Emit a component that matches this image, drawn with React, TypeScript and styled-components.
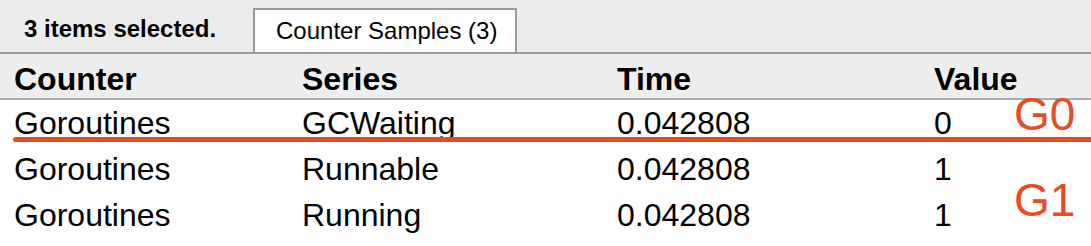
import React from 'react';
import styled, { createGlobalStyle } from 'styled-components';

const FONT = '"Liberation Sans", Arial, Helvetica, sans-serif';
const ACCENT = '#e84c22';

const GlobalStyle = createGlobalStyle`
  html, body {
    margin: 0;
    padding: 0;
    background: #ffffff;
  }
  body {
    font-family: ${FONT};
    color: #000;
    overflow: hidden;
  }
`;

const Page = styled.div`
  position: relative;
  width: 1091px;
  height: 246px;
  overflow: hidden;
  background: #ffffff;
`;

const TopBar = styled.div`
  display: flex;
  align-items: flex-end;
  height: 52px;
  background: #ececec;
  border-bottom: 2px solid #999999;
`;

const Selection = styled.div`
  font-size: 24px;
  font-weight: bold;
  line-height: 28px;
  padding: 0 0 9px 24px;
  width: 229px;
`;

const Tab = styled.div`
  box-sizing: border-box;
  height: 44px;
  width: 264px;
  padding: 7px 0 0 21px;
  font-size: 24px;
  line-height: 28px;
  background: #ffffff;
  border: 2px solid #999999;
  border-bottom: none;
`;

const Grid = styled.div`
  display: grid;
  grid-template-columns: 288px 315px 317px 1fr;
  padding-left: 14px;
`;

const HeaderRow = styled(Grid)`
  background: #eeeeee;
  border-bottom: 2px solid #aaaaaa;
  height: 46px;
  box-sizing: border-box;
  padding-top: 6px;
`;

const HeadCell = styled.div`
  font-size: 32px;
  font-weight: bold;
  line-height: 38px;
`;

const Row = styled(Grid)`
  height: 46px;
`;

const Cell = styled.div`
  font-size: 32px;
  line-height: 46px;
  white-space: nowrap;
`;

const Underline = styled.div`
  position: absolute;
  left: 13px;
  right: 0;
  top: 137px;
  height: 5px;
  background: ${ACCENT};
  border-radius: 3px 0 0 3px;
`;

const Tag = styled.div<{ $top: number }>`
  position: absolute;
  left: 1014px;
  top: ${p => p.$top}px;
  font-size: 46px;
  line-height: 1;
  color: ${ACCENT};
`;

interface Sample {
  counter: string;
  series: string;
  time: string;
  value: number;
}

const samples: Sample[] = [
  { counter: 'Goroutines', series: 'GCWaiting', time: '0.042808', value: 0 },
  { counter: 'Goroutines', series: 'Runnable', time: '0.042808', value: 1 },
  { counter: 'Goroutines', series: 'Running', time: '0.042808', value: 1 },
];

export default function App() {
  return (
    <Page>
      <GlobalStyle />
      <TopBar>
        <Selection>3 items selected.</Selection>
        <Tab>Counter Samples (3)</Tab>
      </TopBar>
      <HeaderRow>
        <HeadCell>Counter</HeadCell>
        <HeadCell>Series</HeadCell>
        <HeadCell>Time</HeadCell>
        <HeadCell>Value</HeadCell>
      </HeaderRow>
      {samples.map(s => (
        <Row key={s.series}>
          <Cell>{s.counter}</Cell>
          <Cell>{s.series}</Cell>
          <Cell>{s.time}</Cell>
          <Cell>{s.value}</Cell>
        </Row>
      ))}
      <Underline />
      <Tag $top={91}>G0</Tag>
      <Tag $top={177}>G1</Tag>
    </Page>
  );
}
